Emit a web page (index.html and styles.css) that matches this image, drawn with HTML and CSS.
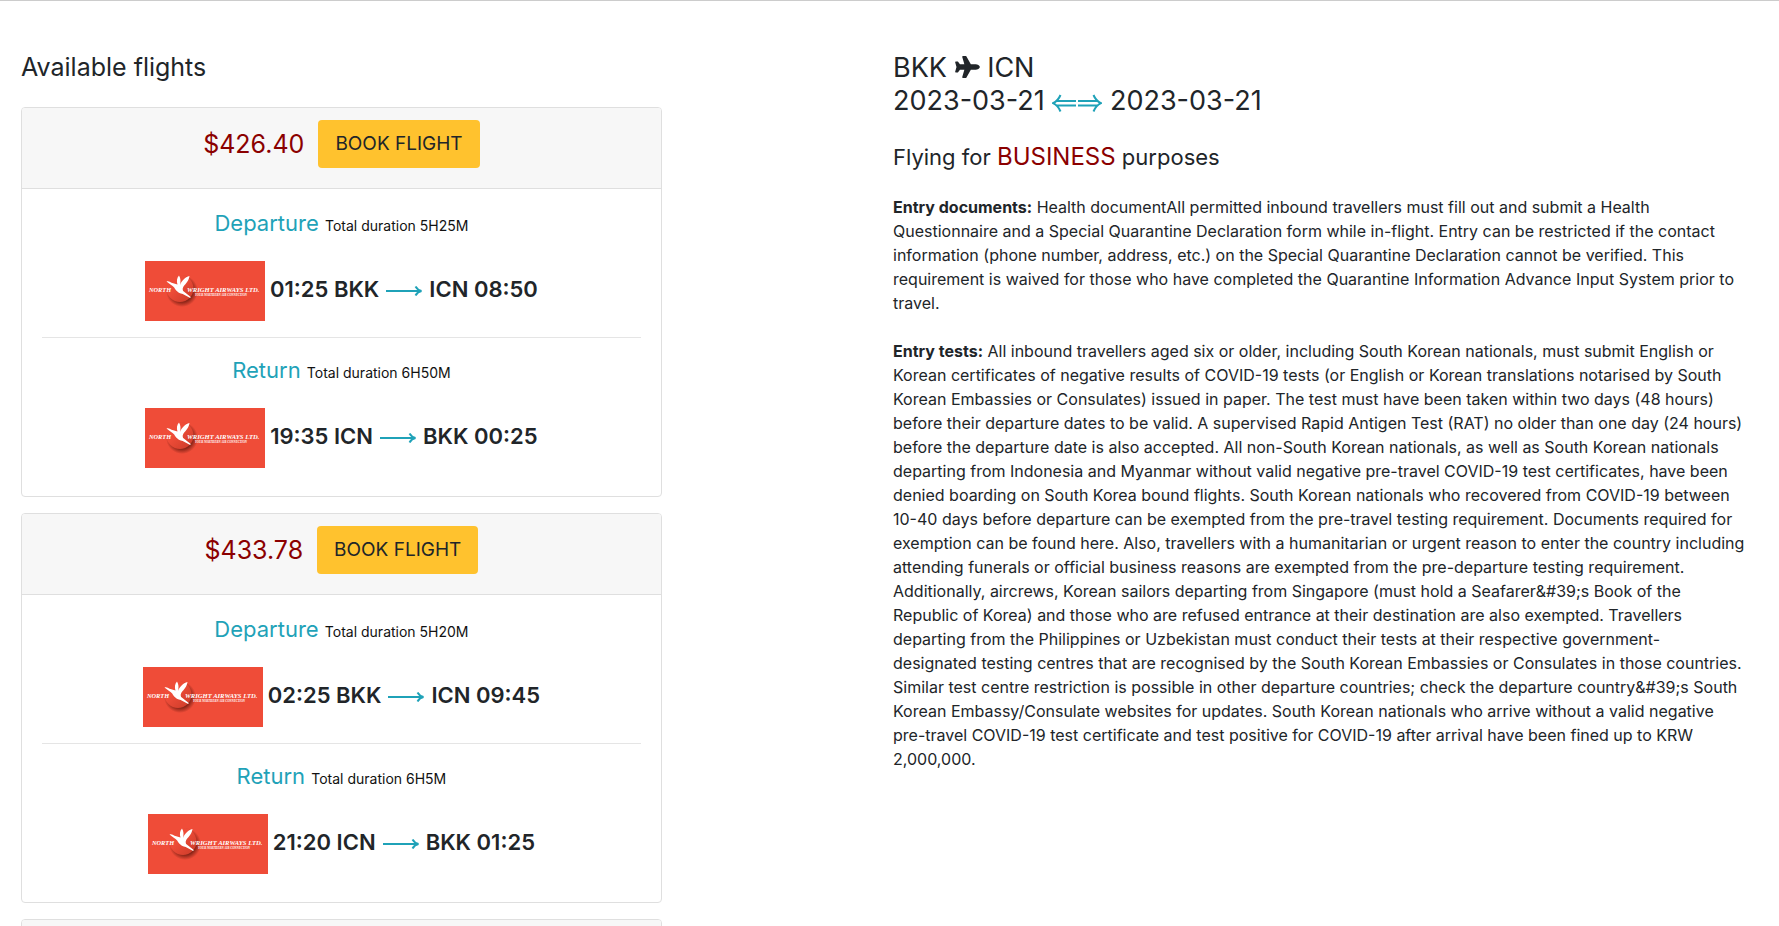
FILE: index.html
```html
<!DOCTYPE html>
<html lang="en">
<head>
<meta charset="utf-8">
<title>Available flights</title>
<link rel="stylesheet" href="styles.css">
</head>
<body>
<svg class="defs" width="0" height="0" aria-hidden="true">
  <defs>
    <radialGradient id="shade">
      <stop offset="0.6" stop-color="#5a1208" stop-opacity="0.85"/>
      <stop offset="1" stop-color="#5a1208" stop-opacity="0"/>
    </radialGradient>
    <linearGradient id="ball" x1="0" y1="0" x2="1" y2="1">
      <stop offset="0.4" stop-color="#ee4c38"/>
      <stop offset="1" stop-color="#c93a28"/>
    </linearGradient>
  </defs>
  <symbol id="airline" viewBox="0 0 120 60">
    <rect width="120" height="60" fill="#ef4c38"/>
    <circle cx="37" cy="30" r="16" fill="url(#shade)"/>
    <circle cx="35" cy="27.500" r="13.500" fill="url(#ball)"/>
    <path fill="#fff" d="M21.500 20.500c2-.7 3.500.3 5 1.300l6 1.700c-1-3-.8-6.500 1.500-9 1.800 3 1.800 6 1 9.500 1.500-4 5-8 9.500-9-.5 4.500-3.500 7.500-6 10.500-1 1.500-1 3-.3 4.500l7.500 6-.5 1-7.500-4c-5-1-7-4-8.500-6.500-2-2-4.500-3.500-7.700-6z"/>
    <text class="logo-text" font-size="6.300" x="4" y="30.500">NORTH</text>
    <text class="logo-text" font-size="6.600" x="42" y="30.500">WRIGHT AIRWAYS LTD.</text>
    <text class="logo-text" font-size="3" x="50" y="34.500">YOUR NORTHERN AIR CONNECTION</text>
  </symbol>
  <symbol id="arrow" viewBox="0 0 36 12">
    <path d="M0 6H34M29.500 1.500C31 4 33 5.500 35.500 6 33 6.500 31 8 29.500 10.500" fill="none" stroke="currentColor" stroke-width="2"/>
  </symbol>
</svg>
<main class="page">
  <section>
    <h1 class="title">Available flights</h1>
    <div class="cards">
      <article class="card">
        <header class="card-head"><span class="price">$426.40</span><button class="book" type="button">BOOK FLIGHT</button></header>
        <div class="card-body">
          <div class="leg">
            <h2 class="leg-title">Departure <small>Total duration 5H25M</small></h2>
            <p class="route"><svg class="logo" role="img" aria-label="Airline logo"><use href="#airline"/></svg><span>01:25 BKK</span><svg class="arrow" aria-hidden="true"><use href="#arrow"/></svg><span>ICN 08:50</span></p>
          </div>
          <div class="leg">
            <h2 class="leg-title">Return <small>Total duration 6H50M</small></h2>
            <p class="route"><svg class="logo" role="img" aria-label="Airline logo"><use href="#airline"/></svg><span>19:35 ICN</span><svg class="arrow" aria-hidden="true"><use href="#arrow"/></svg><span>BKK 00:25</span></p>
          </div>
        </div>
      </article>
      <article class="card">
        <header class="card-head"><span class="price">$433.78</span><button class="book" type="button">BOOK FLIGHT</button></header>
        <div class="card-body">
          <div class="leg">
            <h2 class="leg-title">Departure <small>Total duration 5H20M</small></h2>
            <p class="route"><svg class="logo" role="img" aria-label="Airline logo"><use href="#airline"/></svg><span>02:25 BKK</span><svg class="arrow" aria-hidden="true"><use href="#arrow"/></svg><span>ICN 09:45</span></p>
          </div>
          <div class="leg">
            <h2 class="leg-title">Return <small>Total duration 6H5M</small></h2>
            <p class="route"><svg class="logo" role="img" aria-label="Airline logo"><use href="#airline"/></svg><span>21:20 ICN</span><svg class="arrow" aria-hidden="true"><use href="#arrow"/></svg><span>BKK 01:25</span></p>
          </div>
        </div>
      </article>
      <article class="card"><header class="card-head"></header></article>
    </div>
  </section>
  <section>
    <h2 class="title trip">BKK <svg class="plane" viewBox="0 0 576 512" aria-hidden="true"><path fill="currentColor" d="M480 192H365.710L260.610 8.060A16.014 16.014 0 0 0 246.710 0h-65.500c-10.630 0-18.300 10.170-15.380 20.390L214.860 192H112l-43.200-57.600c-3.020-4.030-7.770-6.400-12.800-6.400H16.010C5.600 128-2.040 137.780.49 147.880L32 256 .49 364.120C-2.040 374.220 5.600 384 16.010 384H56c5.040 0 9.780-2.370 12.800-6.400L112 320h102.860l-49.030 171.600c-2.920 10.220 4.750 20.400 15.380 20.400h65.500c5.740 0 11.040-3.080 13.890-8.060L365.710 320H480c35.350 0 96-28.650 96-64s-60.650-64-96-64z"/></svg> ICN<br>2023-03-21 <svg class="both" viewBox="0 0 50 18" aria-hidden="true"><path d="M4 7H24M4 11.500H24M8.500 1Q6 7 1 9.200 6 11.500 8.500 17.500M26 7H46M26 11.500H46M41.500 1Q44 7 49 9.200 44 11.500 41.500 17.500" fill="none" stroke="currentColor" stroke-width="2"/></svg> 2023-03-21</h2>
    <h3 class="purpose">Flying for <span class="reason">BUSINESS</span> purposes</h3>
    <div class="notes">
      <p><b>Entry documents:</b> Health documentAll permitted inbound travellers must fill out and submit a Health<br>
      Questionnaire and a Special Quarantine Declaration form while in-flight. Entry can be restricted if the contact<br>
      information (phone number, address, etc.) on the Special Quarantine Declaration cannot be verified. This<br>
      requirement is waived for those who have completed the Quarantine Information Advance Input System prior to<br>
      travel.</p>
      <p><b>Entry tests:</b> All inbound travellers aged six or older, including South Korean nationals, must submit English or<br>
      Korean certificates of negative results of COVID-19 tests (or English or Korean translations notarised by South<br>
      Korean Embassies or Consulates) issued in paper. The test must have been taken within two days (48 hours)<br>
      before their departure dates to be valid. A supervised Rapid Antigen Test (RAT) no older than one day (24 hours)<br>
      before the departure date is also accepted. All non-South Korean nationals, as well as South Korean nationals<br>
      departing from Indonesia and Myanmar without valid negative pre-travel COVID-19 test certificates, have been<br>
      denied boarding on South Korea bound flights. South Korean nationals who recovered from COVID-19 between<br>
      10-40 days before departure can be exempted from the pre-travel testing requirement. Documents required for<br>
      exemption can be found here. Also, travellers with a humanitarian or urgent reason to enter the country including<br>
      attending funerals or official business reasons are exempted from the pre-departure testing requirement.<br>
      Additionally, aircrews, Korean sailors departing from Singapore (must hold a Seafarer&amp;#39;s Book of the<br>
      Republic of Korea) and those who are refused entrance at their destination are also exempted. Travellers<br>
      departing from the Philippines or Uzbekistan must conduct their tests at their respective government-<br>
      designated testing centres that are recognised by the South Korean Embassies or Consulates in those countries.<br>
      Similar test centre restriction is possible in other departure countries; check the departure country&amp;#39;s South<br>
      Korean Embassy/Consulate websites for updates. South Korean nationals who arrive without a valid negative<br>
      pre-travel COVID-19 test certificate and test positive for COVID-19 after arrival have been fined up to KRW<br>
      2,000,000.</p>
    </div>
  </section>
</main>
</body>
</html>
```
FILE: styles.css
```css
* { box-sizing: border-box; }
body {
  margin: 0;
  height: 100vh;
  overflow: hidden;
  border-top: 1px solid #ccc;
  background: #fff;
  color: #212529;
  font: 16px/24px Inter, sans-serif;
}
h1, h2, h3, p { margin: 0; font-weight: 400; }
.defs { position: absolute; }
.page {
  display: grid;
  grid-template-columns: 1fr 1fr;
  column-gap: 6px;
  padding: 50px 20px 0 21px;
}
.title { font-size: 25px; line-height: 33px; }
.trip { font-size: 27px; }
.cards {
  display: grid;
  gap: 16px;
  width: 74%;
  margin-top: 23px;
}
.card {
  border: 1px solid #dfdfdf;
  border-radius: 4px;
  overflow: hidden;
}
.card-head {
  display: flex;
  justify-content: center;
  align-items: center;
  gap: 14px;
  min-height: 81px;
  padding: 12px 20px 20px;
  border-bottom: 1px solid #dfdfdf;
  background: #f7f7f7;
}
.price { color: #8b0000; font-size: 25px; }
.book {
  height: 48px;
  padding: 0 17px;
  border: 0;
  border-radius: 4px;
  background: #ffc22e;
  color: #212529;
  font: 19px/30px Inter, sans-serif;
}
.card-body { padding: 0 20px 12px; }
.leg { padding: 20px 0 16px; }
.leg + .leg { border-top: 1px solid #e5e5e5; padding-top: 18px; }
.leg-title { color: #1fa2b8; font-size: 22px; line-height: 29px; text-align: center; }
.leg-title small { color: #111; font-size: 14px; }
.route {
  display: flex;
  justify-content: center;
  align-items: center;
  gap: 5px;
  margin-top: 21px;
  font-size: 22px;
  font-weight: 600;
}
.route span { padding-bottom: 4px; }
.logo { width: 120px; height: 60px; }
.arrow { width: 36px; height: 12px; margin: 0 2px; color: #1fa2b8; }
.logo-text { font-family: "Liberation Serif", serif; font-style: italic; font-weight: 700; fill: #fff; }
.plane { width: 25px; height: 22px; vertical-align: -1px; }
.both { width: 50px; height: 18px; vertical-align: -2px; color: #1fa2b8; }
.purpose { margin-top: 25px; font-size: 22px; line-height: 29px; }
.reason { color: #8b0000; font-size: 24px; }
.notes { display: grid; gap: 24px; margin-top: 23px; }
```
